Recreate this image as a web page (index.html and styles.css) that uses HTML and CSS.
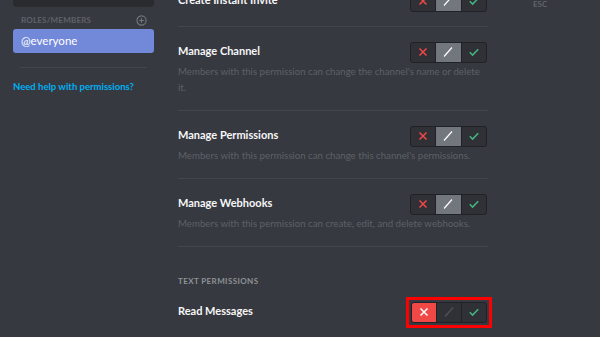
FILE: index.html
```html
<!DOCTYPE html>
<html lang="en">
<head>
    <meta charset="UTF-8">
    <title>Channel Permissions</title>
    <link rel="stylesheet" href="styles.css">
</head>
<body>

    <div class="layout">

        <div class="sidebar">
            <div class="search"></div>
            <div class="roles-header">
                <span>Roles/Members</span>
                <svg class="add-icon" width="11" height="11" viewBox="0 0 12 12">
                    <circle cx="6" cy="6" r="5" fill="none" stroke="currentColor" stroke-width="1.2"/>
                    <path d="M6 3.5v5M3.5 6h5" stroke="currentColor" stroke-width="1.2"/>
                </svg>
            </div>
            <div class="role">@everyone</div>
            <div class="sidebar-divider"></div>
            <div class="help-link">Need help with permissions?</div>
        </div>

        <div class="content">
            <div class="perm-list">

                <div class="perm">
                    <div class="perm-head">
                        <span class="perm-title">Create Instant Invite</span>
                        <div class="toggle">
                            <span class="seg deny"><svg width="12" height="12" viewBox="0 0 12 12"><path d="M2.5 2.5l7 7M9.5 2.5l-7 7"/></svg></span>
                            <span class="seg neutral on"><svg width="12" height="12" viewBox="0 0 12 12"><path d="M2 10.5L10 1.5"/></svg></span>
                            <span class="seg allow"><svg width="12" height="12" viewBox="0 0 12 12"><path d="M1.8 6.3l2.8 2.8L10.2 3.3"/></svg></span>
                        </div>
                    </div>
                </div>

                <div class="perm">
                    <div class="perm-head">
                        <span class="perm-title">Manage Channel</span>
                        <div class="toggle">
                            <span class="seg deny"><svg width="12" height="12" viewBox="0 0 12 12"><path d="M2.5 2.5l7 7M9.5 2.5l-7 7"/></svg></span>
                            <span class="seg neutral on"><svg width="12" height="12" viewBox="0 0 12 12"><path d="M2 10.5L10 1.5"/></svg></span>
                            <span class="seg allow"><svg width="12" height="12" viewBox="0 0 12 12"><path d="M1.8 6.3l2.8 2.8L10.2 3.3"/></svg></span>
                        </div>
                    </div>
                    <div class="perm-desc">Members with this permission can change the channel's name or delete it.</div>
                </div>

                <div class="perm">
                    <div class="perm-head">
                        <span class="perm-title">Manage Permissions</span>
                        <div class="toggle">
                            <span class="seg deny"><svg width="12" height="12" viewBox="0 0 12 12"><path d="M2.5 2.5l7 7M9.5 2.5l-7 7"/></svg></span>
                            <span class="seg neutral on"><svg width="12" height="12" viewBox="0 0 12 12"><path d="M2 10.5L10 1.5"/></svg></span>
                            <span class="seg allow"><svg width="12" height="12" viewBox="0 0 12 12"><path d="M1.8 6.3l2.8 2.8L10.2 3.3"/></svg></span>
                        </div>
                    </div>
                    <div class="perm-desc">Members with this permission can change this channel's permissions.</div>
                </div>

                <div class="perm">
                    <div class="perm-head">
                        <span class="perm-title">Manage Webhooks</span>
                        <div class="toggle">
                            <span class="seg deny"><svg width="12" height="12" viewBox="0 0 12 12"><path d="M2.5 2.5l7 7M9.5 2.5l-7 7"/></svg></span>
                            <span class="seg neutral on"><svg width="12" height="12" viewBox="0 0 12 12"><path d="M2 10.5L10 1.5"/></svg></span>
                            <span class="seg allow"><svg width="12" height="12" viewBox="0 0 12 12"><path d="M1.8 6.3l2.8 2.8L10.2 3.3"/></svg></span>
                        </div>
                    </div>
                    <div class="perm-desc">Members with this permission can create, edit, and delete webhooks.</div>
                </div>

                <h3 class="section-title">Text Permissions</h3>

                <div class="perm">
                    <div class="perm-head">
                        <span class="perm-title">Read Messages</span>
                        <div class="highlight">
                            <div class="toggle">
                                <span class="seg deny on"><svg width="12" height="12" viewBox="0 0 12 12"><path d="M2.5 2.5l7 7M9.5 2.5l-7 7"/></svg></span>
                                <span class="seg neutral"><svg width="12" height="12" viewBox="0 0 12 12"><path d="M2 10.5L10 1.5"/></svg></span>
                                <span class="seg allow"><svg width="12" height="12" viewBox="0 0 12 12"><path d="M1.8 6.3l2.8 2.8L10.2 3.3"/></svg></span>
                            </div>
                        </div>
                    </div>
                </div>

            </div>
        </div>

        <div class="close">ESC</div>

    </div>

</body>
</html>
```

FILE: styles.css
```css
*{
    margin: 0;
    padding: 0;
    box-sizing: border-box;
}

body{
    height: 337px;
    overflow: hidden;
    background: #36393f;
    font-family: Lato, "Open Sans", sans-serif;
}

.layout{
    display: flex;
    align-items: flex-start;
}

/* left column */

.sidebar{
    width: 154px;
    padding-left: 13px;
    flex-shrink: 0;
}

.search{
    height: 7px;
    background: #292b2f;
    border-radius: 0 0 4px 4px;
}

.roles-header{
    display: flex;
    justify-content: space-between;
    align-items: center;
    margin-top: 7px;
    height: 12px;
    padding: 0 7px 0 8px;
    color: #5f636a;
    font-size: 8px;
    font-weight: 700;
    letter-spacing: 0.2px;
    text-transform: uppercase;
}

.add-icon{
    color: #72767d;
}

.role{
    margin-top: 3px;
    height: 24px;
    line-height: 24px;
    padding: 0 8px;
    background: #7289da;
    border-radius: 3px;
    color: #fff;
    font-size: 11.5px;
}

.sidebar-divider{
    height: 1px;
    margin: 14px 7px 0 7px;
    background: #42454a;
}

.help-link{
    margin-top: 12px;
    line-height: 14px;
    color: #00b0f4;
    font-size: 9.5px;
    font-weight: 700;
}

/* permissions */

.content{
    width: 310px;
    margin-left: 24px;
    flex-shrink: 0;
}

.perm-list{
    margin-top: -24px;
}

.perm{
    padding: 15px 0;
    border-bottom: 1px solid #42454a;
}

.perm-head{
    display: flex;
    justify-content: space-between;
    align-items: center;
    height: 20px;
}

.perm-title{
    margin-bottom: 3px;
    color: #f6f6f7;
    font-size: 11px;
    font-weight: 700;
}

.perm-desc{
    margin-top: 1px;
    padding-right: 6px;
    line-height: 16px;
    color: #5d6168;
    font-size: 9.7px;
}

.section-title{
    margin-top: 28px;
    line-height: 12px;
    color: #8e9297;
    font-size: 8px;
    font-weight: 700;
    letter-spacing: 0.4px;
    text-transform: uppercase;
}

.toggle{
    display: flex;
    width: 77px;
    height: 21px;
    margin-right: 1px;
    border: 1px solid #202225;
    border-radius: 3px;
    background: #2f3136;
    overflow: hidden;
}

.highlight{
    margin: -5px -4px -5px -5px;
    padding: 2px;
    border: 3px solid #f00;
}

.highlight .toggle{
    margin-right: 0;
    width: 76px;
}

.seg{
    flex: 1;
    display: flex;
    justify-content: center;
    align-items: center;
}

.seg + .seg{
    border-left: 1px solid #202225;
}

.seg svg path{
    fill: none;
    stroke: currentColor;
    stroke-width: 1.5;
}

.deny{ color: #f04747; }
.neutral{ color: #4f545c; }
.allow{ color: #43b581; }

.seg.on{ color: #fff; }
.deny.on{ background: #f04747; }
.neutral.on{ background: #72767d; }

.neutral svg path{
    stroke-width: 1.2;
}

/* esc */

.close{
    margin: 0 0 0 45px;
    line-height: 8px;
    color: #5f636a;
    font-size: 8px;
    font-weight: 700;
}
```
